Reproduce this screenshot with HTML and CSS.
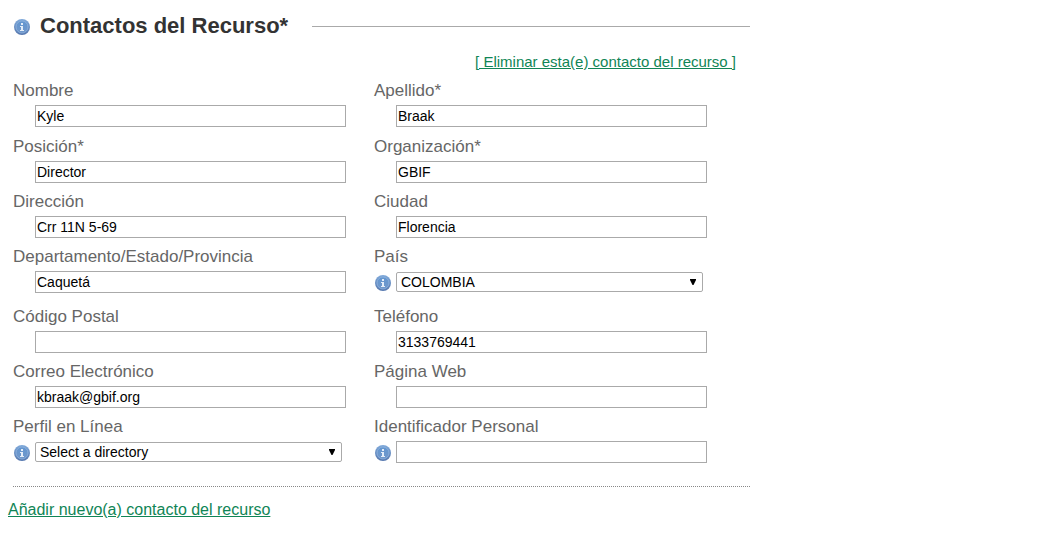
FILE: index.html
```
<!DOCTYPE html>
<html lang="es">
<head>
<meta charset="utf-8">
<title>Contactos del Recurso</title>
<link rel="stylesheet" href="styles.css">
</head>
<body>
<svg class="defs" aria-hidden="true">
  <defs>
    <linearGradient id="disc" x1="0" y1="0" x2="0" y2="1">
      <stop offset="0" stop-color="#7fa9da"/>
      <stop offset="1" stop-color="#5577ae"/>
    </linearGradient>
    <linearGradient id="face" x1="0" y1="0" x2="0" y2="1">
      <stop offset="0" stop-color="#6396d0"/>
      <stop offset="1" stop-color="#7198cb"/>
    </linearGradient>
    <symbol id="info" viewBox="0 0 16 16">
      <circle cx="8" cy="8" r="8" fill="url(#disc)"/>
      <circle cx="8" cy="8" r="6" fill="url(#face)" stroke="#8fb3dd" stroke-width="0.8"/>
      <path d="M7 4h2v2H7zM6 7h3v4h1v1H6v-1h1V8H6z" fill="#e4edf8"/>
    </symbol>
    <symbol id="arrow" viewBox="0 0 6 6"><path d="M0 0h6v1L3.5 6h-1L0 1z"/></symbol>
  </defs>
</svg>
<form class="page">
  <header class="heading">
    <svg class="info" role="img" aria-label="Información"><use href="#info"/></svg>
    <h1 class="title">Contactos del Recurso*</h1>
    <span class="rule"></span>
  </header>
  <section class="contact">
    <div class="remove"><a class="link remove-link" href="#">[ Eliminar esta(e) contacto del recurso ]</a></div>
    <div class="row row-name">
      <div class="field"><label for="nombre">Nombre</label><input class="control text" id="nombre" value="Kyle"></div>
      <div class="field"><label for="apellido">Apellido*</label><input class="control text" id="apellido" value="Braak"></div>
    </div>
    <div class="row">
      <div class="field"><label for="posicion">Posición*</label><input class="control text" id="posicion" value="Director"></div>
      <div class="field"><label for="organizacion">Organización*</label><input class="control text" id="organizacion" value="GBIF"></div>
    </div>
    <div class="row">
      <div class="field"><label for="direccion">Dirección</label><input class="control text" id="direccion" value="Crr 11N 5-69"></div>
      <div class="field"><label for="ciudad">Ciudad</label><input class="control text" id="ciudad" value="Florencia"></div>
    </div>
    <div class="row row-region">
      <div class="field"><label for="provincia">Departamento/Estado/Provincia</label><input class="control text" id="provincia" value="Caquetá"></div>
      <div class="field"><label for="pais">País</label><svg class="info" role="img" aria-label="Información"><use href="#info"/></svg>
        <div class="control picker"><select id="pais"><option>COLOMBIA</option></select><svg class="arrow" aria-hidden="true"><use href="#arrow"/></svg></div></div>
    </div>
    <div class="row">
      <div class="field"><label for="postal">Código Postal</label><input class="control text" id="postal"></div>
      <div class="field"><label for="telefono">Teléfono</label><input class="control text" id="telefono" type="tel" value="3133769441"></div>
    </div>
    <div class="row">
      <div class="field"><label for="correo">Correo Electrónico</label><input class="control text" id="correo" type="email" value="kbraak@gbif.org"></div>
      <div class="field"><label for="web">Página Web</label><input class="control text" id="web" type="url"></div>
    </div>
    <div class="row">
      <div class="field"><label for="perfil">Perfil en Línea</label><svg class="info" role="img" aria-label="Información"><use href="#info"/></svg>
        <div class="control picker"><select id="perfil"><option>Select a directory</option></select><svg class="arrow" aria-hidden="true"><use href="#arrow"/></svg></div></div>
      <div class="field"><label for="identificador">Identificador Personal</label><svg class="info" role="img" aria-label="Información"><use href="#info"/></svg><input class="control text" id="identificador"></div>
    </div>
  </section>
  <a class="link" href="#">Añadir nuevo(a) contacto del recurso</a>
</form>
</body>
</html>
```
FILE: styles.css
```
* { box-sizing: border-box; }
body {
  margin: 0;
  padding: 12px 8px;
  background: #fff;
  color: #666;
  font-family: "Liberation Sans", Arial, sans-serif;
  font-size: 16px;
}
.defs { position: absolute; width: 0; height: 0; }
.page { max-width: 742px; }
.heading { display: flex; align-items: center; padding-left: 5px; }
.info { width: 16px; height: 16px; margin: 2px 0 0 1px; flex: none; }
.title {
  margin: 0 24px 0 10px;
  color: #333;
  font-size: 22px;
  line-height: 28px;
}
.rule { flex: 1; border-top: 1px solid #aaa; }
.contact {
  margin-left: 5px;
  padding-bottom: 15px;
  border-bottom: 1px dotted #888;
}
.remove { padding: 12px 14px 9px 0; text-align: right; line-height: 20px; }
.link { color: #108556; line-height: 46px; }
.remove-link { font-size: 15px; line-height: 20px; }
.row {
  display: grid;
  grid-template-columns: 1fr 1fr;
  gap: 28px;
  margin-bottom: 9px;
  padding-right: 43px;
}
.row-name { margin-bottom: 10px; }
.row-region { margin-bottom: 14px; }
.row:last-child { margin-bottom: 8px; }
.field {
  display: grid;
  grid-template-columns: 22px 1fr;
  grid-template-rows: 20px 22px;
  row-gap: 4px;
  align-items: center;
}
.field label { grid-column: 1 / 3; font-size: 17px; line-height: 20px; }
.control { grid-column: 2; min-width: 0; }
.text {
  width: 100%;
  height: 22px;
  padding: 1px;
  border: 1px solid #aaa;
  color: #000;
  font: 14px "Liberation Sans", Arial, sans-serif;
}
.picker { position: relative; margin-right: 4px; height: 20px; }
.picker select {
  display: block;
  width: 100%;
  height: 20px;
  padding: 0 20px 0 4px;
  appearance: none;
  border: 1px solid #aaa;
  border-radius: 2px;
  background: #fff;
  color: #000;
  font: 14px "Liberation Sans", Arial, sans-serif;
}
.arrow {
  position: absolute;
  top: 7px;
  right: 7px;
  width: 6px;
  height: 6px;
  pointer-events: none;
}
```
